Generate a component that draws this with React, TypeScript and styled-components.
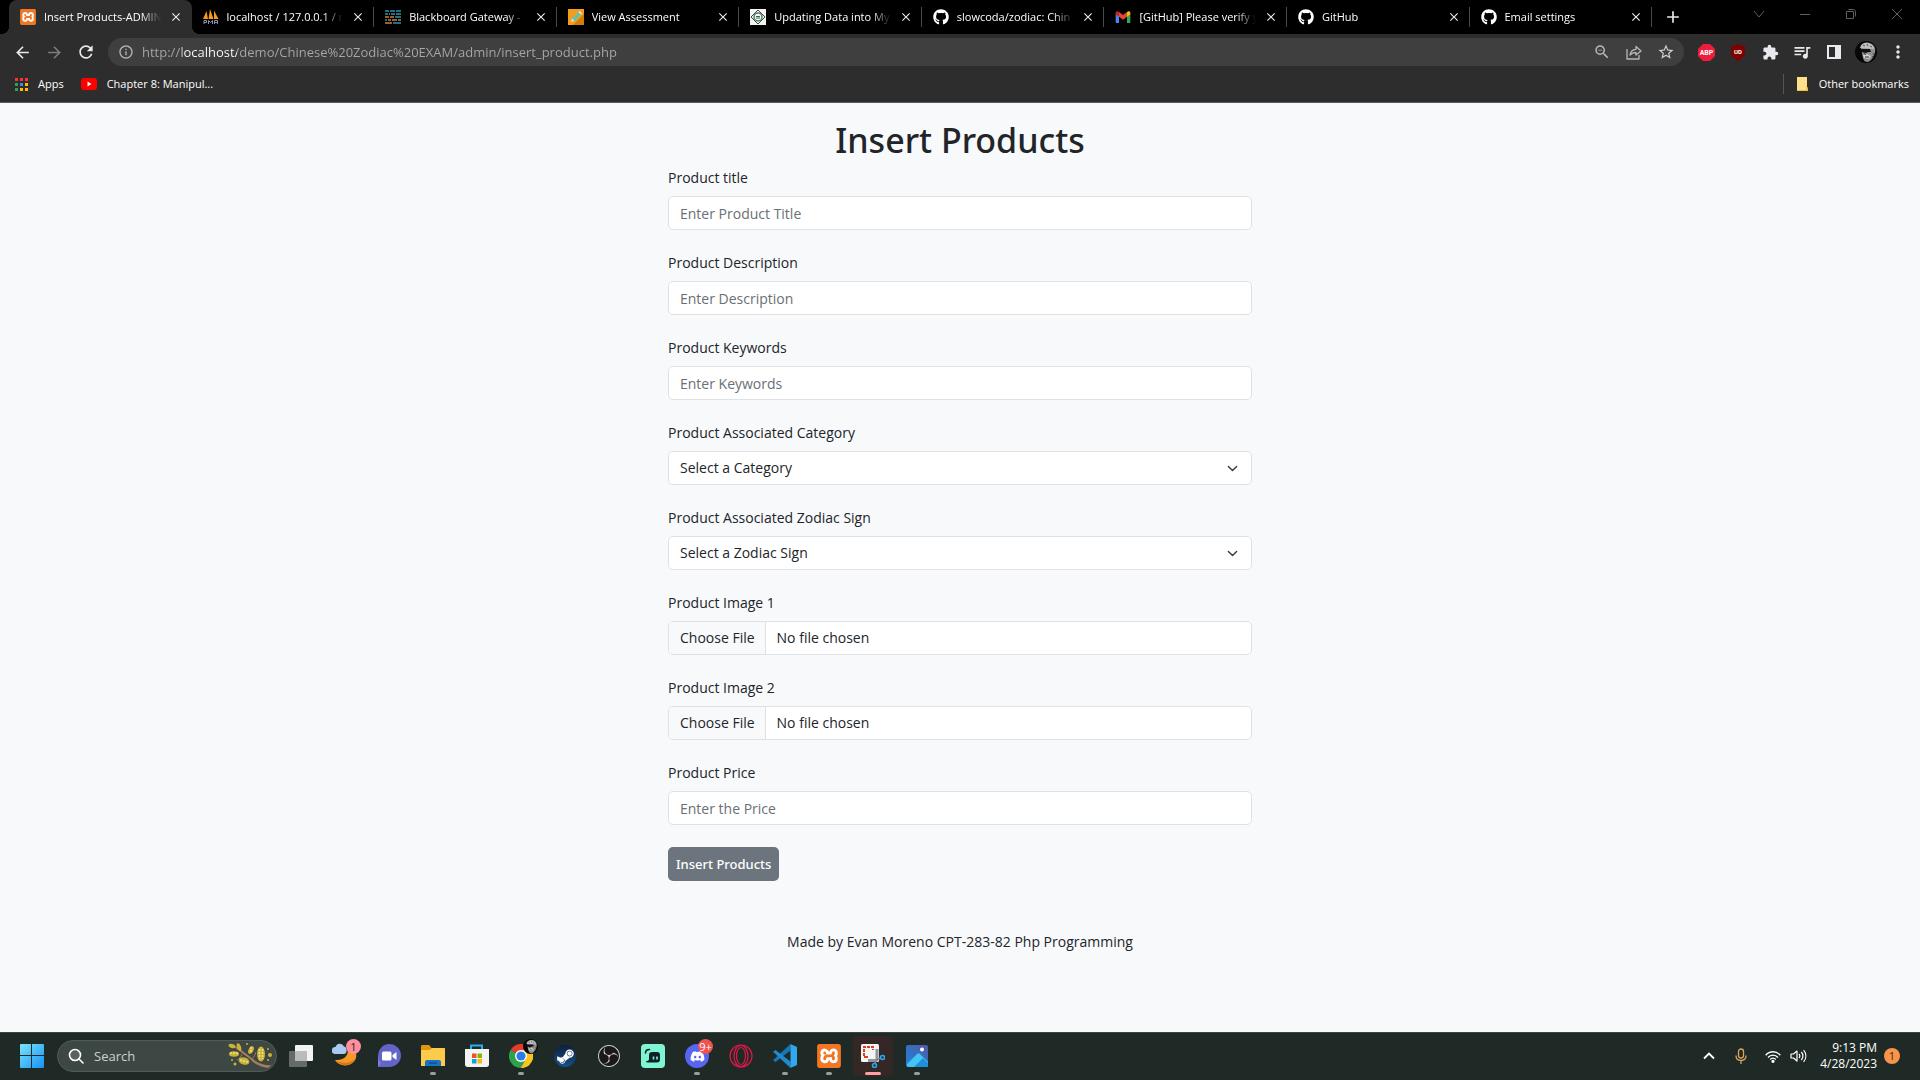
import React from "react";
import styled, { createGlobalStyle } from "styled-components";
import { FaGithub, FaSteamSymbol, FaDiscord } from "react-icons/fa";
import { SiXampp, SiObsstudio } from "react-icons/si";
import {
  MdArrowBack,
  MdArrowForward,
  MdRefresh,
  MdInfoOutline,
  MdStarBorder,
  MdExtension,
  MdQueueMusic,
  MdMoreVert,
  MdZoomOut,
  MdClose,
  MdAdd,
} from "react-icons/md";

const GlobalStyle = createGlobalStyle`
  *, *::before, *::after { box-sizing: border-box; }
  body {
    margin: 0;
    background: #f8f9fb;
    color: #212529;
    font-family: "Open Sans", "Noto Sans", sans-serif;
    font-size: 14px;
    line-height: 22px;
  }
  button, input, select { font: inherit; color: inherit; margin: 0; }
  button { border: 0; padding: 0; background: none; cursor: pointer; }
  svg { display: block; flex: none; }
`;

const Screen = styled.div`
  display: flex;
  flex-direction: column;
  min-height: 100vh;
`;

/* ---------- browser window ---------- */

const Browser = styled.header`
  background: #2d2d2d;
  color: #fff;
  border-bottom: 1px solid #5c5c5c;
  font-size: 11px;
`;

const TabStrip = styled.div`
  display: flex;
  height: 34px;
  background: #000;
`;

const TabList = styled.nav`
  display: flex;
  flex: 1;
  min-width: 0;
  padding-left: 9px;
`;

const Tab = styled.div<{ $active?: boolean; $divider?: boolean }>`
  position: relative;
  display: flex;
  flex: 1 1 0;
  min-width: 0;
  align-items: center;
  gap: 8px;
  padding: 0 9px 0 11px;
  border-radius: 8px 8px 0 0;
  background: ${(p) => (p.$active ? "#2d2d2d" : "transparent")};

  &::before {
    content: "";
    display: ${(p) => (p.$active ? "block" : "none")};
    position: absolute;
    z-index: 1;
    left: -8px;
    right: -8px;
    bottom: 0;
    height: 8px;
    background:
      radial-gradient(circle at 0 0, transparent 8px, #2d2d2d 8px) left / 8px 8px no-repeat,
      radial-gradient(circle at 100% 0, transparent 8px, #2d2d2d 8px) right / 8px 8px no-repeat;
  }

  &::after {
    content: "";
    display: ${(p) => (p.$divider ? "block" : "none")};
    position: absolute;
    right: 0;
    top: 7px;
    width: 1px;
    height: 20px;
    background: #4a4a4a;
  }
`;

const TabTitle = styled.button`
  flex: 1;
  min-width: 0;
  overflow: hidden;
  white-space: nowrap;
  text-align: left;
  line-height: 18px;
  mask-image: linear-gradient(90deg, #000 calc(100% - 20px), transparent);
`;

const IconButton = styled.button<{ $size?: number; $color?: string }>`
  display: flex;
  flex: none;
  align-items: center;
  justify-content: center;
  width: ${(p) => p.$size ?? 32}px;
  height: ${(p) => Math.min(p.$size ?? 32, 32)}px;
  color: ${(p) => p.$color ?? "#e8eaed"};
`;

const NewTab = styled(IconButton)`
  width: 42px;
  height: 34px;
`;

const WindowControls = styled.div`
  display: flex;
  margin-left: 42px;
`;

const WindowButton = styled(IconButton)`
  width: 46px;
  height: 28px;
  color: #5f5f5f;
`;

const Toolbar = styled.div`
  display: flex;
  align-items: center;
  height: 36px;
  padding: 0 6px;
`;

const AddressBar = styled.form`
  display: flex;
  flex: 1;
  align-items: center;
  height: 28px;
  margin: 0 6px;
  padding: 0 2px 0 10px;
  border-radius: 14px;
  background: #3f3f3f;
  color: #b4b4b4;
`;

const AddressInput = styled.input`
  flex: 1;
  min-width: 0;
  height: 24px;
  margin-left: 8px;
  padding: 0;
  border: 0;
  outline: 0;
  color: transparent;
  caret-color: #fff;
  font-size: 13px;
  background: linear-gradient(90deg, #a8a8a8 40px, #fff 40px, #fff 95px, #a8a8a8 95px);
  background-clip: text;
  -webkit-background-clip: text;
`;

const Bookmarks = styled.nav`
  display: flex;
  align-items: center;
  justify-content: space-between;
  height: 32px;
  padding: 0 11px 4px 15px;
`;

const BookmarkGroup = styled.div<{ $divided?: boolean }>`
  display: flex;
  gap: 17px;
  padding-left: ${(p) => (p.$divided ? "12px" : "0")};
  border-left: ${(p) => (p.$divided ? "1px solid #555" : "0")};
  line-height: 20px;
`;

const Bookmark = styled.a`
  display: flex;
  align-items: center;
  gap: 10px;
  color: #fff;
  text-decoration: none;
`;

/* ---------- page ---------- */

const Page = styled.main`
  flex: 1;
  padding: 16px 24px;
`;

const Title = styled.h1`
  margin: 0 0 5px;
  font-family: "Noto Sans", "Open Sans", sans-serif;
  font-size: 34px;
  line-height: 43px;
  font-weight: 500;
  text-align: center;
`;

const Form = styled.form`
  display: flex;
  flex-direction: column;
  align-items: flex-start;
  gap: 22px;
  width: 100%;
  max-width: 584px;
  margin: 0 auto;
`;

const Field = styled.div`
  display: flex;
  flex-direction: column;
  gap: 7px;
  width: 100%;
`;

const Control = styled.input`
  display: block;
  width: 100%;
  height: 34px;
  padding: 5px 11px;
  border: 1px solid #dee2e6;
  border-radius: 5px;
  background: #fff;
  line-height: 22px;

  &::placeholder { color: #6a6f74; opacity: 1; }
`;

const FileControl = styled(Control)`
  overflow: hidden;

  &::file-selector-button {
    margin: -5px 11px -5px -11px;
    padding: 5px 10px 5px 11px;
    border: 0 solid #dee2e6;
    border-right-width: 1px;
    background: #f8f9fa;
    color: #212529;
    font: inherit;
    line-height: 22px;
  }
`;

const SelectControl = styled(Control).attrs({ as: "select" })`
  appearance: none;
  background: #fff
    url("data:image/svg+xml,%3csvg xmlns='http://www.w3.org/2000/svg' viewBox='0 0 16 16'%3e%3cpath fill='none' stroke='%23343a40' stroke-linecap='round' stroke-linejoin='round' stroke-width='2' d='m2 5 6 6 6-6'/%3e%3c/svg%3e")
    no-repeat right 13px center / 11px 11px;
`;

const Submit = styled.button`
  height: 34px;
  padding: 0 8px;
  border-radius: 5px;
  background: #6c757d;
  color: #fff;
  font-family: "Noto Sans", "Open Sans", sans-serif;
  font-size: 13px;
  font-weight: 500;
`;

const Footer = styled.footer`
  padding-top: 50px;
  text-align: center;
`;

/* ---------- task bar ---------- */

const TaskBar = styled.footer`
  display: flex;
  align-items: center;
  height: 48px;
  padding: 0 20px 1px 10px;
  border-top: 1px solid #3a4441;
  background: #1f2a27;
  color: #fff;
`;

const TaskGroup = styled.div`
  display: flex;
  gap: 4px;
  padding: 0 2px;
`;

const TaskButton = styled.button<{ $current?: boolean; $running?: boolean }>`
  position: relative;
  display: flex;
  align-items: center;
  justify-content: center;
  width: 40px;
  height: 40px;
  border-radius: 4px;
  background: ${(p) => (p.$current ? "#342726" : "transparent")};

  &::after {
    content: "";
    display: ${(p) => (p.$running || p.$current ? "block" : "none")};
    position: absolute;
    bottom: 1px;
    left: calc(50% - ${(p) => (p.$current ? 8 : 3)}px);
    width: ${(p) => (p.$current ? 16 : 6)}px;
    height: 3px;
    border-radius: 2px;
    background: ${(p) => (p.$current ? "#ff9ea6" : "#9a9f9d")};
  }
`;

const Badge = styled.span<{ $tone: string; $ink: string }>`
  position: absolute;
  top: 3px;
  right: 4px;
  min-width: 15px;
  height: 15px;
  border-radius: 8px;
  background: ${(p) => p.$tone};
  color: ${(p) => p.$ink};
  font-size: 11px;
  line-height: 15px;
  text-align: center;
`;

const AvatarBadge = styled.span`
  position: absolute;
  top: 3px;
  right: 3px;
`;

const SearchBox = styled.label`
  display: flex;
  align-items: center;
  gap: 10px;
  width: 220px;
  height: 32px;
  margin: 0 2px 0 3px;
  padding: 0 2px 0 10px;
  border: 1px solid #515b58;
  border-radius: 16px;
  background: #3d4744;
`;

const SearchInput = styled.input`
  flex: 1;
  min-width: 0;
  padding: 0;
  border: 0;
  outline: 0;
  background: transparent;
  font-size: 13px;

  &::placeholder { color: #ccd1cf; opacity: 1; }
`;

const Tray = styled.div`
  display: flex;
  align-items: center;
  margin-left: auto;
`;

const TrayButton = styled.button<{ $width: number }>`
  display: flex;
  align-items: center;
  justify-content: center;
  width: ${(p) => p.$width}px;
  height: 40px;
`;

const Clock = styled.button`
  margin: 0 7px 0 13px;
  font-size: 12px;
  line-height: 16px;
  text-align: right;
`;

const Notice = styled.button`
  width: 16px;
  height: 16px;
  border-radius: 8px;
  background: #f7954a;
  color: #40280f;
  font-size: 11px;
  line-height: 16px;
`;

/* ---------- drawings ---------- */

const XamppMark = styled.span<{ $size: number }>`
  display: block;
  flex: none;
  width: ${(p) => p.$size}px;
  height: ${(p) => p.$size}px;
  border-radius: 3px;
  background: linear-gradient(#fff, #fff) center / 80% 80% no-repeat;
  color: #f37623;
`;

const XamppIcon = ({ size }: { size: number }) => (
  <XamppMark $size={size}>
    <SiXampp size={size} />
  </XamppMark>
);

const PmaIcon = () => (
  <svg width="16" height="16" viewBox="0 0 16 16">
    <path d="M0 10 3.500 2l1.500 8zM5.500 10 7 0l3.500 10zM11 10V1.500L15.500 10z" fill="#f79a1e" />
    <path d="M1 15v-3.500h2.500v2H1M5.500 15v-3.500l2 2 2-2V15M11.500 15v-3.500h3V15M11.500 13.500h3" fill="none" stroke="#8a8fb8" />
  </svg>
);

const BlackboardIcon = () => (
  <svg width="16" height="16" viewBox="0 0 16 16">
    <path d="M0 1h4v2H0zM5 1h5v2H5zM11 1h5v2h-5zM0 4h3v2H0zM6 4h4v2H6zM11 4h5v2h-5zM0 10h2v2H0zM10 7h6v2h-6zM8 13h8v2H8z" fill="#1f6f88" />
    <path d="M4 4h1v2H4zM0 7h4v2H0zM7 10h5v2H7zM13 10h3v2h-3zM5 7h4v2H5zM3 10h3v2H3zM0 13h7v2H0z" fill="#9a5f2a" />
  </svg>
);

const AssessmentIcon = () => (
  <svg width="16" height="16" viewBox="0 0 16 16">
    <path d="M0 0h16v16H0z" fill="#f79b1c" />
    <path d="M16 5v11H5z" fill="#d57c08" />
    <path d="m3 13 1-3.500L10.500 3 13 5.500 6.500 12z" fill="#59c7b3" />
    <path d="m10.500 3 1-1 2.500 2.500-1 1z" fill="#f3f3e9" />
    <path d="m3 13 1-3.500L6.500 12z" fill="#fbe1b4" />
  </svg>
);

const TutorialIcon = () => (
  <svg width="16" height="16" viewBox="0 0 16 16">
    <path d="M0 0h16v16H0z" fill="#f4f4f4" />
    <path d="m8 1 7 7-7 7-7-7z" fill="none" stroke="#3d4a46" />
    <circle cx="8" cy="8" r="4" fill="none" stroke="#557d68" strokeWidth="1.500" />
    <path d="M6 7.500h4M6 9h4" stroke="#28754a" />
  </svg>
);

const GmailIcon = () => (
  <svg width="16" height="16" viewBox="0 0 24 24">
    <path d="M1 6v13.500c0 .8.700 1.500 1.500 1.500H6V10.500z" fill="#4285f4" />
    <path d="M18 21h3.500c.8 0 1.500-.700 1.500-1.500V6l-5 4.500z" fill="#34a853" />
    <path d="M18 5v6.500L23 8V6c0-2.500-2.500-3.300-4-2z" fill="#fbbc04" />
    <path d="M6 11.500V4.500l6 4.500 6-4.500v7l-6 4.500z" fill="#ea4335" />
    <path d="M1 6v2l5 3.500v-7L5 4C3.500 2.700 1 3.500 1 6z" fill="#c5221f" />
  </svg>
);

const AppsIcon = () => {
  const colors = ["#f33", "#f33", "#f33", "#27a35a", "#4285f4", "#fb0", "#27a35a", "#fb0", "#fb0"];
  return (
    <svg width="13" height="13" viewBox="0 0 13 13">
      {colors.map((c, i) => (
        <rect key={i} x={(i % 3) * 5} y={Math.floor(i / 3) * 5} width="3" height="3" fill={c} />
      ))}
    </svg>
  );
};

const YoutubeIcon = () => (
  <svg width="16" height="12" viewBox="0 0 16 12">
    <rect width="16" height="12" rx="3" fill="#f00" />
    <path d="m6.500 3.500 4 2.500-4 2.500z" fill="#fff" />
  </svg>
);

const FolderIcon = () => (
  <svg width="13" height="16" viewBox="0 0 13 16">
    <path d="M1 1h10v10l1 1v3H1z" fill="#ffe08a" />
    <path d="M1 15h11v-3l-2-1v3H1z" fill="#eec04e" />
  </svg>
);

const ShareIcon = () => (
  <svg width="18" height="18" viewBox="0 0 18 18" fill="none" stroke="currentColor" strokeWidth="1.300" strokeLinejoin="round">
    <path d="M2 6v10h12v-4" />
    <path d="M5 12c.5-4 2.500-5.500 6-5.700V3.500L16 8l-5 4V9.500c-2.500 0-4.500.700-6 2.500z" />
  </svg>
);

const AbpIcon = () => (
  <svg width="17" height="17" viewBox="0 0 17 17">
    <path d="M5 0h7l5 5v7l-5 5H5l-5-5V5z" fill="#f01c3c" />
    <text x="8.500" y="11" textAnchor="middle" fontSize="7" fontWeight="700" fontFamily="Roboto, sans-serif" fill="#fff">ABP</text>
  </svg>
);

const UblockIcon = () => (
  <svg width="16" height="17" viewBox="0 0 16 17">
    <path d="M8 0c2 1.500 4 2 7 2v6c0 4-3 6.500-7 9-4-2.500-7-5-7-9V2c3 0 5-.5 7-2z" fill="#800000" />
    <text x="8" y="10" textAnchor="middle" fontSize="6" fontWeight="700" fontFamily="Roboto, sans-serif" fill="#fff">UD</text>
  </svg>
);

const SidePanelIcon = () => (
  <svg width="14" height="14" viewBox="0 0 14 14">
    <path fillRule="evenodd" d="M0 0h14v14H0zM2 2v10h6V2z" fill="#e8eaed" />
  </svg>
);

const Portrait = ({ size }: { size: number }) => (
  <svg width={size} height={size} viewBox="0 0 22 22">
    <circle cx="11" cy="11" r="11" fill="#070707" />
    <path d="M6 8c0-5 4-7 8-6 5 1 7 5 6 9-1 5-4 9-7 10-3 0-4-1-5-4z" fill="#8e8e8e" />
    <path d="M5 7c1-5 5-6 9-5 3 1 5 4 5 6z" fill="#bdbdbd" />
    <path d="M8 4l2 1M12 3l1 2M15 5l2 1M18 12l1 2M17 15l1 1" stroke="#555" />
    <path d="M5 8h10l1 3h-3l-2 1-5-1z" fill="#111" />
    <path d="M8 14l4-1 4 2-2 3-5-1z" fill="#d0d0d0" />
    <path d="M10 16h4M9 12.500l2 1" stroke="#333" />
  </svg>
);

const WindowsIcon = () => (
  <svg width="24" height="24" viewBox="0 0 24 24">
    <defs>
      <linearGradient id="win" x1="0" y1="0" x2="1" y2="1">
        <stop offset="0" stopColor="#7be3fb" />
        <stop offset="1" stopColor="#1493f5" />
      </linearGradient>
    </defs>
    <path d="M0 1a1 1 0 0 1 1-1h10v11H0zM12 0h11a1 1 0 0 1 1 1v10H12zM0 12h11v12H1a1 1 0 0 1-1-1zM12 12h12v11a1 1 0 0 1-1 1H12z" fill="url(#win)" />
  </svg>
);

const BranchIcon = () => (
  <svg width="46" height="28" viewBox="0 0 46 28">
    <path d="M7 4c8 5 13 9 18 13 6 5 12 7 19 6l-4 3c-8-1-14-4-18-9C15 12 10 8 6 5z" fill="#a97c5c" />
    <path d="M14 12c-1 3-3 5-5 6M24 17c2-2 3-4 4-7" stroke="#a97c5c" fill="none" />
    <g fill="#c9b238">
      <ellipse cx="4" cy="4" rx="3.500" ry="2" transform="rotate(20 4 4)" />
      <ellipse cx="11" cy="5" rx="2" ry="4" transform="rotate(-20 11 5)" />
      <ellipse cx="6" cy="12" rx="5" ry="2.800" />
      <ellipse cx="16" cy="19" rx="5.500" ry="3.600" transform="rotate(15 16 19)" />
      <ellipse cx="23" cy="8" rx="2.500" ry="4.200" transform="rotate(25 23 8)" />
      <ellipse cx="33" cy="12" rx="4" ry="7.500" />
      <circle cx="42" cy="13" r="2" />
      <circle cx="40" cy="18" r="1" />
      <circle cx="7" cy="22" r="1.500" />
      <circle cx="4" cy="18" r="1" />
      <circle cx="19" cy="2" r="1" />
      <circle cx="40" cy="7" r="1" />
    </g>
    <g stroke="#efe27e" strokeWidth="1.500" strokeDasharray="2 1" fill="none">
      <path d="M2 11h8M12 18l8 2M31.500 7v10M34.500 7v10M23 5v6" />
    </g>
  </svg>
);

const TaskViewIcon = () => (
  <svg width="24" height="22" viewBox="0 0 24 22">
    <rect x="6" y="0" width="18" height="16" rx="1" fill="#f3f3f3" />
    <rect x="0" y="6" width="18" height="16" rx="1" fill="#666a69" />
    <rect x="6" y="6" width="12" height="10" fill="#b9bcbb" />
  </svg>
);

const WeatherIcon = () => (
  <svg width="26" height="26" viewBox="0 0 26 26">
    <path d="M15 4c3 8-3 14-12 13 4 7 17 8 21-2 1.500-5-2-10-9-11z" fill="#f59a23" />
    <path d="M4 18c5 6 17 6 20-3-4 5-12 6-20 3z" fill="#e0731b" />
    <path d="M3 11a3.500 3.500 0 0 1 .500-7A4.500 4.500 0 0 1 12 3.500c3 0 4 7 0 7.500z" fill="#a9c8f2" />
  </svg>
);

const ChatIcon = () => (
  <svg width="24" height="24" viewBox="0 0 24 24">
    <path d="M1 23V12A11.500 11.500 0 1 1 12.500 23z" fill="#6264c7" />
    <path d="M1 23V12a11 11 0 0 0 3 7.500z" fill="#8a78d8" />
    <rect x="5" y="7.500" width="9.500" height="9" rx="1.500" fill="#fff" />
    <path d="m15.500 11 4-3v8l-4-3z" fill="#fff" />
  </svg>
);

const ExplorerIcon = () => (
  <svg width="24" height="22" viewBox="0 0 24 22">
    <path d="M0 1.500C0 .700.700 0 1.500 0H8l2.500 3H24v6H0z" fill="#e0960c" />
    <path d="M0 5h9l2-2h11.500c.8 0 1.500.700 1.500 1.500V21H0z" fill="#fdcb4b" />
    <path d="M4 21v-4c0-1.200 1-2 2-2h12c1 0 2 .8 2 2v4z" fill="#1574c4" />
    <path d="M8 18h8" stroke="#0b4f8f" strokeWidth="1.500" />
  </svg>
);

const StoreIcon = () => (
  <svg width="24" height="24" viewBox="0 0 24 24">
    <path d="M6 6V1.500h11V6" fill="none" stroke="#27b0f0" strokeWidth="2" />
    <path d="M0 5h24v15.500c0 1.500-1 2.500-2.500 2.500h-19C1 23 0 22 0 20.500z" fill="#f3f3f3" />
    <path d="M7 9.500h4.500V14H7z" fill="#f25022" />
    <path d="M12.500 9.500H17V14h-4.500z" fill="#7fba00" />
    <path d="M7 15h4.500v4.500H7z" fill="#00a4ef" />
    <path d="M12.500 15H17v4.500h-4.500z" fill="#ffb900" />
  </svg>
);

const ChromeIcon = () => (
  <svg width="24" height="24" viewBox="0 0 24 24">
    <path d="M12 12 1.600 6a12 12 0 0 1 20.800 0z" fill="#e33b2e" />
    <path d="M12 12 22.400 6A12 12 0 0 1 12 24z" fill="#fcc31e" />
    <path d="M1.600 6 12 12l5.200 3L12 24A12 12 0 0 1 1.600 6z" fill="#2da14c" />
    <path d="M12 6h10.400A12 12 0 0 1 12 24l5.200-9z" fill="#fcc31e" />
    <circle cx="12" cy="12" r="6" fill="#fff" />
    <circle cx="12" cy="12" r="4.600" fill="#2b7ce9" />
  </svg>
);

const SteamDisc = styled.span`
  display: flex;
  align-items: center;
  justify-content: center;
  width: 22px;
  height: 22px;
  border-radius: 11px;
  background: linear-gradient(#101d3c, #14518c);
  color: #fff;
`;

const ObsDisc = styled(SteamDisc)`
  background: #1b181b;
  color: #cfcfcf;
`;

const DiscordDisc = styled(SteamDisc)`
  width: 24px;
  height: 24px;
  border-radius: 12px;
  background: #5865f2;
`;

const StreamlabsIcon = () => (
  <svg width="24" height="24" viewBox="0 0 24 24">
    <rect width="24" height="24" rx="4" fill="#80f5d2" />
    <path d="M4.500 9c0-2.500 1.200-3.500 4-3.500" stroke="#0b2229" strokeWidth="1.600" fill="none" strokeLinecap="round" />
    <path d="M8 11c0-2 1-3 3-3h5c2 0 3 1 3 3v4.500c0 2-1 3-3 3H7.500c-1.500 0-2.500-.5-2.500-1.500 2 0 3-.5 3-2z" fill="#0b2229" />
    <path d="M12.500 12.500v3M16 12.500v3" stroke="#80f5d2" strokeWidth="1.600" />
  </svg>
);

const OperaIcon = () => (
  <svg width="24" height="24" viewBox="0 0 24 24" fill="none" stroke="#e0184a" strokeWidth="1.200">
    <circle cx="12" cy="12" r="11" />
    <ellipse cx="12" cy="12" rx="7" ry="10.500" />
    <ellipse cx="12" cy="12" rx="4.500" ry="8.500" />
  </svg>
);

const VsCodeIcon = () => (
  <svg width="24" height="24" viewBox="0 0 24 24">
    <path d="M17.500 0v6.500L2.500 18 0 16.200z" fill="#1478b8" />
    <path d="M17.500 24v-6.500L2.500 6 0 7.800z" fill="#1f8ad0" />
    <path d="M17.500 0 24 3v18l-6.500 3z" fill="#2fa8ee" />
  </svg>
);

const SnippingIcon = () => (
  <svg width="24" height="24" viewBox="0 0 24 24">
    <rect width="18" height="18" rx="1.500" fill="#f4f4f4" />
    <path d="M3 12V3h9v3" fill="none" stroke="#d2421c" strokeWidth="2" strokeDasharray="3 1" />
    <path d="M3 13h4" stroke="#d2421c" strokeWidth="2" />
    <path d="M16 5v10c0 1-.5 1.500-1.500 1.500H7" fill="none" stroke="#8f979c" strokeWidth="3" />
    <path d="m15 16 5-2M15 16l-1 4" stroke="#7e868b" strokeWidth="1.500" />
    <g fill="none" stroke="#27a9ee" strokeWidth="1.600">
      <circle cx="21.500" cy="13.500" r="2" />
      <circle cx="13.500" cy="21.500" r="2" />
    </g>
  </svg>
);

const PhotosIcon = () => (
  <svg width="22" height="22" viewBox="0 0 22 22">
    <defs>
      <linearGradient id="sky" x1="0" y1="1" x2="1" y2="0">
        <stop offset="0" stopColor="#1b87da" />
        <stop offset="1" stopColor="#5457a8" />
      </linearGradient>
    </defs>
    <rect width="22" height="22" rx="2" fill="url(#sky)" />
    <path d="M1 19 11 9c1-1 2-1 3 0l8 8v3a2 2 0 0 1-2 2H3a2 2 0 0 1-2-1z" fill="#43c4f3" />
    <path d="m8 22 9-9 5 5v2a2 2 0 0 1-2 2z" fill="#1d8fdc" />
    <circle cx="16" cy="4.500" r="2" fill="#fff" />
  </svg>
);

const SearchGlyph = () => (
  <svg width="16" height="16" viewBox="0 0 16 16" fill="#59625f" stroke="#fff" strokeWidth="1.600">
    <circle cx="7" cy="7" r="5.500" />
    <path d="m11 11 4 4" strokeLinecap="round" />
  </svg>
);

const tabs = [
  { title: "Insert Products-ADMIN", icon: <XamppIcon size={16} />, active: true },
  { title: "localhost / 127.0.0.1 / r", icon: <PmaIcon />, divider: true },
  { title: "Blackboard Gateway -", icon: <BlackboardIcon />, divider: true },
  { title: "View Assessment", icon: <AssessmentIcon />, divider: true },
  { title: "Updating Data into My", icon: <TutorialIcon />, divider: true },
  { title: "slowcoda/zodiac: Chin", icon: <FaGithub size={16} />, divider: true },
  { title: "[GitHub] Please verify y", icon: <GmailIcon />, divider: true },
  { title: "GitHub", icon: <FaGithub size={16} />, divider: true },
  { title: "Email settings", icon: <FaGithub size={16} />, divider: true },
];

const apps = [
  { name: "Task View", icon: <TaskViewIcon /> },
  { name: "Widgets", icon: <WeatherIcon />, badge: <Badge $tone="#ff8f9c" $ink="#1c1c1c">1</Badge> },
  { name: "Chat", icon: <ChatIcon /> },
  { name: "File Explorer", icon: <ExplorerIcon />, running: true },
  { name: "Store", icon: <StoreIcon /> },
  { name: "Chrome", icon: <ChromeIcon />, running: true, badge: <AvatarBadge><Portrait size={15} /></AvatarBadge> },
  { name: "Steam", icon: <SteamDisc><FaSteamSymbol size={19} /></SteamDisc> },
  { name: "OBS Studio", icon: <ObsDisc><SiObsstudio size={22} /></ObsDisc> },
  { name: "Streamlabs", icon: <StreamlabsIcon /> },
  {
    name: "Discord",
    icon: <DiscordDisc><FaDiscord size={15} /></DiscordDisc>,
    running: true,
    badge: <Badge $tone="#ef5350" $ink="#fff">9+</Badge>,
  },
  { name: "Opera GX", icon: <OperaIcon /> },
  { name: "Visual Studio Code", icon: <VsCodeIcon />, running: true },
  { name: "XAMPP", icon: <XamppIcon size={24} />, running: true },
  { name: "Snipping Tool", icon: <SnippingIcon />, current: true },
  { name: "Photos", icon: <PhotosIcon />, running: true },
];

const textField = (id: string, label: string, placeholder: string) => (
  <Field>
    <label htmlFor={id}>{label}</label>
    <Control id={id} type="text" placeholder={placeholder} />
  </Field>
);

const selectField = (id: string, label: string, option: string) => (
  <Field>
    <label htmlFor={id}>{label}</label>
    <SelectControl id={id}>
      <option>{option}</option>
    </SelectControl>
  </Field>
);

const fileField = (id: string, label: string) => (
  <Field>
    <label htmlFor={id}>{label}</label>
    <FileControl id={id} type="file" />
  </Field>
);

export default function App() {
  return (
    <Screen>
      <GlobalStyle />
      <Browser>
        <TabStrip>
          <TabList aria-label="Tabs">
            {tabs.map((t) => (
              <Tab key={t.title} $active={t.active} $divider={t.divider}>
                {t.icon}
                <TabTitle>{t.title}</TabTitle>
                <IconButton $size={14} aria-label="Close tab">
                  <MdClose size={14} />
                </IconButton>
              </Tab>
            ))}
          </TabList>
          <NewTab aria-label="New tab"><MdAdd size={20} /></NewTab>
          <WindowControls>
            <WindowButton aria-label="Search tabs">
              <svg width="12" height="12" viewBox="0 0 12 12" fill="none" stroke="currentColor"><path d="m1 3 5 6 5-6" /></svg>
            </WindowButton>
            <WindowButton aria-label="Minimize">
              <svg width="10" height="10" viewBox="0 0 10 10" stroke="currentColor"><path d="M0 5.500h10" /></svg>
            </WindowButton>
            <WindowButton aria-label="Restore">
              <svg width="10" height="10" viewBox="0 0 10 10" fill="none" stroke="currentColor"><path d="M.5 2.500h7v7h-7zM2.500.5h5c1.200 0 2 .8 2 2v5" /></svg>
            </WindowButton>
            <WindowButton aria-label="Close">
              <svg width="10" height="10" viewBox="0 0 10 10" stroke="currentColor"><path d="m0 0 10 10M10 0 0 10" /></svg>
            </WindowButton>
          </WindowControls>
        </TabStrip>

        <Toolbar>
          <IconButton aria-label="Back"><MdArrowBack size={19} /></IconButton>
          <IconButton aria-label="Forward" $color="#7d7d7d"><MdArrowForward size={19} /></IconButton>
          <IconButton aria-label="Reload"><MdRefresh size={20} /></IconButton>
          <AddressBar>
            <MdInfoOutline size={16} />
            <AddressInput
              aria-label="Address"
              defaultValue="http://localhost/demo/Chinese%20Zodiac%20EXAM/admin/insert_product.php"
            />
            <IconButton type="button" aria-label="Zoom" $color="#b8b8b8"><MdZoomOut size={18} /></IconButton>
            <IconButton type="button" aria-label="Share" $color="#b8b8b8"><ShareIcon /></IconButton>
            <IconButton type="button" aria-label="Bookmark" $color="#d0d0d0"><MdStarBorder size={18} /></IconButton>
          </AddressBar>
          <IconButton aria-label="Adblock Plus"><AbpIcon /></IconButton>
          <IconButton aria-label="Blocker"><UblockIcon /></IconButton>
          <IconButton aria-label="Extensions"><MdExtension size={17} /></IconButton>
          <IconButton aria-label="Media"><MdQueueMusic size={20} /></IconButton>
          <IconButton aria-label="Side panel"><SidePanelIcon /></IconButton>
          <IconButton aria-label="Profile"><Portrait size={22} /></IconButton>
          <IconButton aria-label="Menu"><MdMoreVert size={20} /></IconButton>
        </Toolbar>

        <Bookmarks aria-label="Bookmarks">
          <BookmarkGroup>
            <Bookmark href="#apps"><AppsIcon />Apps</Bookmark>
            <Bookmark href="#chapter"><YoutubeIcon />Chapter 8: Manipul...</Bookmark>
          </BookmarkGroup>
          <BookmarkGroup $divided>
            <Bookmark href="#other"><FolderIcon />Other bookmarks</Bookmark>
          </BookmarkGroup>
        </Bookmarks>
      </Browser>

      <Page>
        <Title>Insert Products</Title>
        <Form>
          {textField("title", "Product title", "Enter Product Title")}
          {textField("description", "Product Description", "Enter Description")}
          {textField("keywords", "Product Keywords", "Enter Keywords")}
          {selectField("category", "Product Associated Category", "Select a Category")}
          {selectField("zodiac", "Product Associated Zodiac Sign", "Select a Zodiac Sign")}
          {fileField("image1", "Product Image 1")}
          {fileField("image2", "Product Image 2")}
          {textField("price", "Product Price", "Enter the Price")}
          <Submit type="button">Insert Products</Submit>
        </Form>
        <Footer>Made by Evan Moreno CPT-283-82 Php Programming</Footer>
      </Page>

      <TaskBar>
        <TaskGroup>
          <TaskButton aria-label="Start"><WindowsIcon /></TaskButton>
        </TaskGroup>
        <SearchBox>
          <SearchGlyph />
          <SearchInput type="search" aria-label="Search" placeholder="Search" />
          <BranchIcon />
        </SearchBox>
        <TaskGroup>
          {apps.map((a) => (
            <TaskButton key={a.name} aria-label={a.name} $current={a.current} $running={a.running}>
              {a.icon}
              {a.badge}
            </TaskButton>
          ))}
        </TaskGroup>
        <Tray>
          <TrayButton $width={32} aria-label="Hidden icons">
            <svg width="12" height="8" viewBox="0 0 12 8" fill="none" stroke="#fff" strokeWidth="1.800"><path d="m1 6.500 5-5 5 5" /></svg>
          </TrayButton>
          <TrayButton $width={32} aria-label="Microphone">
            <svg width="12" height="16" viewBox="0 0 12 16" fill="none" stroke="#d9a45b" strokeWidth="1.300">
              <rect x="3.500" y="1" width="5" height="9" rx="2.500" />
              <path d="M1 7.500c0 3 2 5 5 5s5-2 5-5M6 12.500V16" />
            </svg>
          </TrayButton>
          <TrayButton $width={32} aria-label="Network">
            <svg width="16" height="13" viewBox="0 0 16 13" fill="none" stroke="#fff" strokeWidth="1.300">
              <path d="M.700 5.200c4-4.600 10.600-4.600 14.600 0M3 7.500c2.800-3.200 7.200-3.200 10 0M5.200 9.500c1.600-1.800 4-1.800 5.600 0" />
              <circle cx="8" cy="11.300" r="1" fill="#fff" />
            </svg>
          </TrayButton>
          <TrayButton $width={18} aria-label="Volume">
            <svg width="17" height="14" viewBox="0 0 17 14" fill="none" stroke="#fff" strokeWidth="1.200" strokeLinejoin="round">
              <path d="M1 5v4h2.500L7 12V2L3.500 5zM9 5c1 1.200 1 2.800 0 4M11.300 3c2 2.400 2 5.600 0 8M13.600 1.200c3 3.500 3 8.100 0 11.600" />
            </svg>
          </TrayButton>
          <Clock>
            9:13 PM
            <br />
            4/28/2023
          </Clock>
          <Notice aria-label="1 notification">1</Notice>
        </Tray>
      </TaskBar>
    </Screen>
  );
}
